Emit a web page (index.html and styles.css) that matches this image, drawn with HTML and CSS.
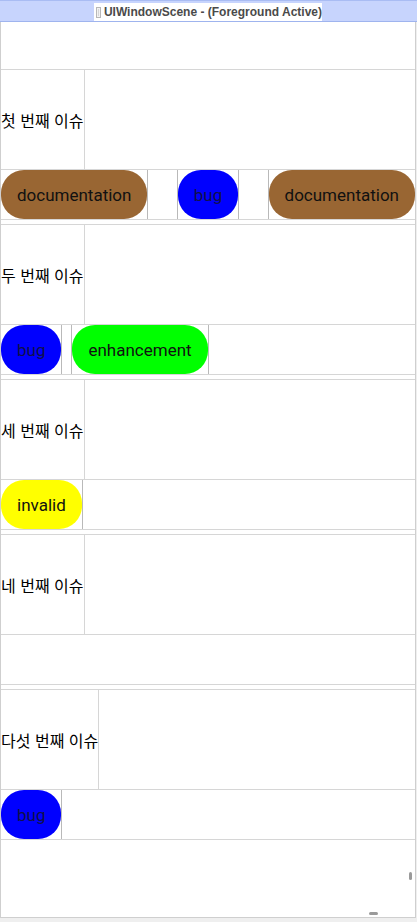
FILE: index.html
```html
<!DOCTYPE html>
<html lang="ko">
<head>
<meta charset="utf-8">
<title>UIWindowScene</title>
<link rel="stylesheet" href="styles.css">
</head>
<body>
<div class="window">
  <div class="titlebar">
    <div class="scene-label"><span class="scene-icon"></span><span>UIWindowScene - (Foreground Active)</span></div>
  </div>
  <div class="content">
    <div class="spacer"></div>

    <div class="issue">
      <div class="issue-header"><div class="issue-title">첫 번째 이슈</div></div>
      <div class="labels spread">
        <div class="label-cell"><span class="pill brown">documentation</span></div>
        <div class="label-cell"><span class="pill blue">bug</span></div>
        <div class="label-cell"><span class="pill brown">documentation</span></div>
      </div>
    </div>

    <div class="issue">
      <div class="issue-header"><div class="issue-title">두 번째 이슈</div></div>
      <div class="labels">
        <div class="label-cell"><span class="pill blue">bug</span></div>
        <div class="label-cell"><span class="pill green">enhancement</span></div>
      </div>
    </div>

    <div class="issue">
      <div class="issue-header"><div class="issue-title">세 번째 이슈</div></div>
      <div class="labels">
        <div class="label-cell"><span class="pill yellow">invalid</span></div>
      </div>
    </div>

    <div class="issue">
      <div class="issue-header"><div class="issue-title">네 번째 이슈</div></div>
      <div class="labels"></div>
    </div>

    <div class="issue">
      <div class="issue-header"><div class="issue-title">다섯 번째 이슈</div></div>
      <div class="labels">
        <div class="label-cell"><span class="pill blue">bug</span></div>
      </div>
    </div>

    <span class="scroll-v"></span>
    <span class="scroll-h"></span>
  </div>
</div>
</body>
</html>
```

FILE: styles.css
```css
html, body {
  margin: 0;
  padding: 0;
  background: #efefef;
}

body {
  width: 417px;
  height: 922px;
  overflow: hidden;
}

.window {
  width: 417px;
  height: 918px;
  box-sizing: border-box;
  display: flex;
  flex-direction: column;
}

.titlebar {
  height: 22px;
  box-sizing: border-box;
  background: #c7d4fd;
  border-top: 1px solid #a9bcf3;
  border-bottom: 1px solid #9fb4ee;
  display: flex;
  justify-content: center;
  align-items: flex-end;
}

.scene-label {
  background: #ffffff;
  height: 18px;
  width: 228px;
  margin-right: 1px;
  display: flex;
  align-items: center;
  gap: 3px;
  padding-left: 2px;
  box-sizing: border-box;
  font-family: "Liberation Sans", Arial, sans-serif;
  font-size: 12px;
  font-weight: bold;
  color: #4a4a4a;
  white-space: nowrap;
}

.scene-icon {
  width: 8px;
  height: 9px;
  border: 1px solid #b8b8b8;
  background: #d6d6d6;
  box-shadow: inset 0 0 0 1px #f2f2f2;
}

.content {
  position: relative;
  flex: 1;
  background: #ffffff;
  border-left: 1px solid #cfcfcf;
  border-right: 1px solid #cfcfcf;
  border-bottom: 1px solid #cfcfcf;
  margin-right: 1px;
  display: flex;
  flex-direction: column;
}

.spacer {
  height: 47px;
}

.issue {
  border-top: 1px solid #d6d6d6;
  border-bottom: 1px solid #d6d6d6;
  margin-bottom: 4px;
}

.issue-header {
  height: 99px;
  display: flex;
  border-bottom: 1px solid #d6d6d6;
}

.issue-title {
  display: flex;
  align-items: center;
  border-right: 1px solid #d6d6d6;
  font-family: "Noto Sans CJK KR", "Noto Sans", sans-serif;
  font-size: 16px;
  color: #000000;
  white-space: nowrap;
}

.labels {
  height: 49px;
  display: flex;
  gap: 10px;
}

.labels.spread {
  justify-content: space-between;
  gap: 0;
}

.label-cell {
  display: flex;
  border-right: 1px solid #b9b9b9;
  border-left: 1px solid #b9b9b9;
  margin-left: -1px;
}

.labels .label-cell:first-child {
  border-left: none;
  margin-left: 0;
}

.labels.spread .label-cell:last-child {
  border-right: none;
}

.pill {
  display: flex;
  align-items: center;
  padding: 0 16px;
  border-radius: 23px;
  font-family: Roboto, "Noto Sans", sans-serif;
  font-size: 17px;
  color: #111111;
  white-space: nowrap;
}

.brown { background: #996633; }
.blue { background: #0000ff; color: #10104a; }
.green { background: #00ff00; }
.yellow { background: #ffff00; }

.scroll-v {
  position: absolute;
  right: 3px;
  top: 850px;
  width: 3px;
  height: 8px;
  border-radius: 2px;
  background: #9a9a9a;
}

.scroll-h {
  position: absolute;
  left: 368px;
  bottom: 2px;
  width: 9px;
  height: 3px;
  border-radius: 2px;
  background: #9a9a9a;
}
```
